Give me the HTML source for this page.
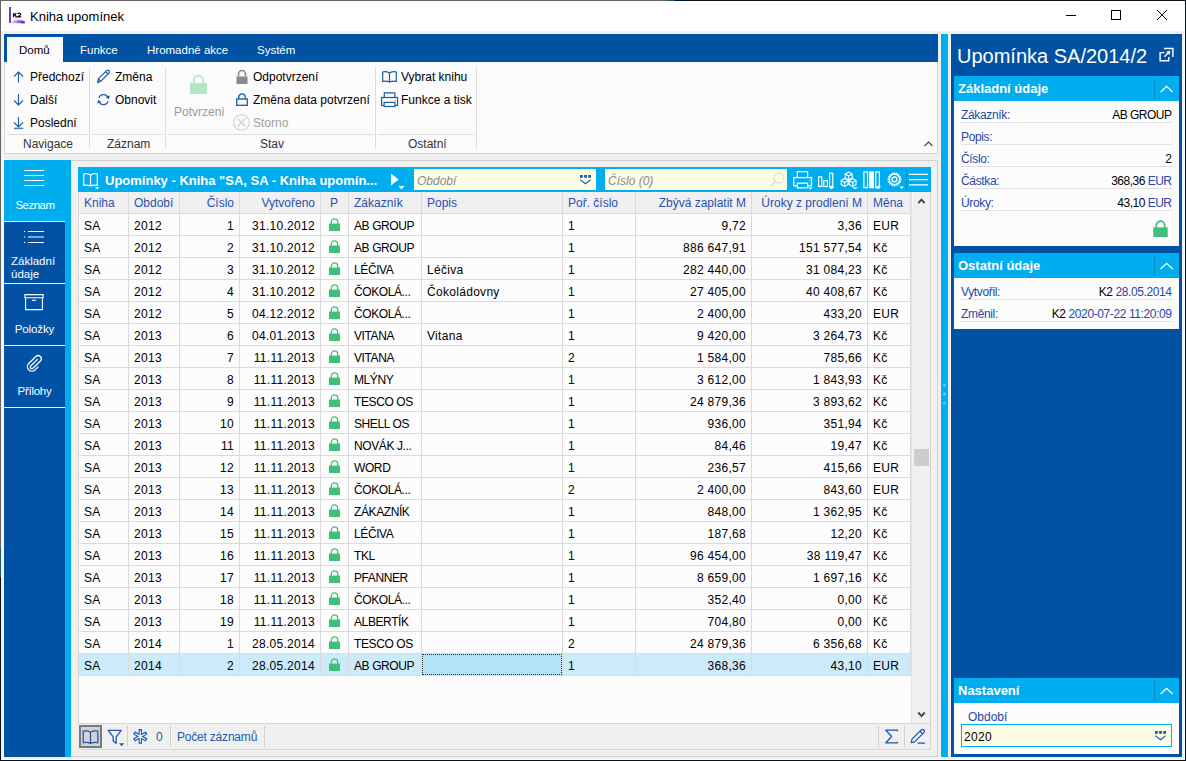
<!DOCTYPE html><html><head><meta charset="utf-8"><style>
*{margin:0;padding:0;box-sizing:border-box}
html,body{width:1186px;height:761px;overflow:hidden;background:#f0f0f0;font-family:"Liberation Sans",sans-serif;font-size:12px;color:#000}
.a{position:absolute}
.t{position:absolute;white-space:nowrap;line-height:14px}
svg{position:absolute;overflow:visible}
</style></head><body>

<div class="a" style="left:0;top:0;width:1186px;height:761px;background:#f0f0f0"></div>
<div class="a" style="left:0;top:0;width:667px;height:1px;background:#646464"></div>
<div class="a" style="left:667px;top:0;width:8px;height:1px;background:#1d5a76"></div>
<div class="a" style="left:675px;top:0;width:511px;height:1px;background:#08121c"></div>
<div class="a" style="left:0;top:0;width:1px;height:548px;background:#646464"></div>
<div class="a" style="left:0;top:548px;width:1px;height:29px;background:#1d5a76"></div>
<div class="a" style="left:0;top:577px;width:1px;height:184px;background:#08121c"></div>
<div class="a" style="left:1185px;top:0;width:1px;height:761px;background:#08121c"></div>
<div class="a" style="left:0;top:760px;width:1186px;height:1px;background:#08121c"></div>
<div class="a" style="left:1px;top:757px;width:1184px;height:2px;background:#f0f0f0"></div>
<div class="a" style="left:1px;top:759px;width:1184px;height:1px;background:#fcfcfc"></div>
<div class="a" style="left:1px;top:31px;width:2px;height:729px;background:#f2f2f2"></div>
<div class="a" style="left:3px;top:31px;width:1px;height:729px;background:#fcfcfc"></div>
<div class="a" style="left:1182px;top:31px;width:2px;height:729px;background:#f2f2f2"></div>
<div class="a" style="left:1184px;top:31px;width:1px;height:729px;background:#fcfcfc"></div>
<div class="a" style="left:1px;top:1px;width:1184px;height:30px;background:#fff"></div>
<svg style="left:9px;top:7px" width="17" height="17" viewBox="0 0 17 17"><rect x="0" y="0" width="2" height="16" fill="#6a3bbf"/><path d="M4.6 6.2V10M4.6 8.3L7.3 6.2M5.6 7.6L7.5 10" fill="none" stroke="#111" stroke-width="1.3"/><path d="M8.4 6.9Q10 5.6 11.5 6.6Q12.2 7.6 10.8 8.6L8.6 9.9H12.3" fill="none" stroke="#111" stroke-width="1.2"/><path d="M2.5 16Q5 12.4 9 12.6Q13 12.8 15.8 14.6L15.6 16.2Q9 16.6 2.5 16Z" fill="#c9a3ea"/><path d="M7 15.8Q9 12.8 12 13.2Q14 13.6 15.8 14.6L15.6 16.2Q11 16.5 7 15.8Z" fill="#8e62d6"/><path d="M11 15.9Q13 13.6 15.8 14.6L15.6 16.2Z" fill="#5a2fc0"/></svg>
<div class="t" style="left:30px;top:10px;font-size:13px">Kniha upomínek</div>
<div class="a" style="left:1066px;top:15px;width:10px;height:1px;background:#000"></div>
<div class="a" style="left:1111px;top:10px;width:10px;height:10px;border:1px solid #000"></div>
<svg style="left:1157px;top:10px" width="10" height="10" viewBox="0 0 10 10"><path d="M0 0L10 10M10 0L0 10" stroke="#000" stroke-width="1"/></svg>
<div class="a" style="left:4px;top:34px;width:934px;height:28px;background:#0152a4"></div>
<div class="a" style="left:7px;top:37px;width:56px;height:25px;background:#fafafa"></div>
<div class="t" style="left:19px;top:43px;font-size:11.5px">Domů</div>
<div class="t" style="left:80px;top:43px;font-size:11.5px;color:#fff">Funkce</div>
<div class="t" style="left:147px;top:43px;font-size:11.5px;color:#fff">Hromadné akce</div>
<div class="t" style="left:257px;top:43px;font-size:11.5px;color:#fff">Systém</div>
<div class="a" style="left:4px;top:62px;width:934px;height:92px;background:#fbfbfb;border:1px solid #d4d4d4;border-top:none"></div>
<div class="a" style="left:89px;top:68px;width:1px;height:80px;background:#dcdcdc"></div>
<div class="a" style="left:165px;top:68px;width:1px;height:80px;background:#dcdcdc"></div>
<div class="a" style="left:375px;top:68px;width:1px;height:80px;background:#dcdcdc"></div>
<div class="a" style="left:476px;top:68px;width:1px;height:80px;background:#dcdcdc"></div>
<div class="a" style="left:7px;top:134px;width:80px;height:1px;background:#dcdcdc"></div>
<div class="a" style="left:92px;top:134px;width:71px;height:1px;background:#dcdcdc"></div>
<div class="a" style="left:168px;top:134px;width:205px;height:1px;background:#dcdcdc"></div>
<div class="a" style="left:378px;top:134px;width:96px;height:1px;background:#dcdcdc"></div>
<svg style="left:13px;top:71px" width="11" height="12" viewBox="0 0 11 12"><path d="M5.5 1V11.5M1 5.5L5.5 1L10 5.5" fill="none" stroke="#1b5aac" stroke-width="1.1"/></svg>
<svg style="left:13px;top:94px" width="11" height="12" viewBox="0 0 11 12"><path d="M5.5 0V11M1 6.5L5.5 11L10 6.5" fill="none" stroke="#1b5aac" stroke-width="1.1"/></svg>
<svg style="left:13px;top:117px" width="11" height="13" viewBox="0 0 11 13"><path d="M5.5 0V10M1 5.5L5.5 10L10 5.5" fill="none" stroke="#1b5aac" stroke-width="1.1"/><path d="M0.9 11.4H10.3" stroke="#1b5aac" stroke-width="1.6" opacity="0.75"/></svg>
<div class="t" style="left:30px;top:70px">Předchozí</div>
<div class="t" style="left:30px;top:93px">Další</div>
<div class="t" style="left:30px;top:116px">Poslední</div>
<div class="t" style="left:23px;top:137px;color:#333">Navigace</div>
<svg style="left:97px;top:70px" width="14" height="14" viewBox="0 0 14 14"><path d="M0.6 12.6L1.3 8.9L9.6 0.6A1.7 1.7 0 0 1 12.0 3.0L3.7 11.3Z M1.3 8.9L3.7 11.3 M8.6 1.6L11 4" fill="none" stroke="#1b5aac" stroke-width="1.2" stroke-linejoin="round"/></svg>
<svg style="left:97px;top:92px" width="14" height="15" viewBox="0 0 14 15"><path d="M1.8 5.9A5 5 0 0 1 11.2 5.9 M11.2 9.3A5 5 0 0 1 1.8 9.3" fill="none" stroke="#1b5aac" stroke-width="1.2"/><path d="M11.8 7.2L12.8 3.6L8.6 5.0Z M1.2 7.9L0.2 11.5L4.4 10.1Z" fill="#1b5aac"/></svg>
<div class="t" style="left:115px;top:70px">Změna</div>
<div class="t" style="left:115px;top:93px">Obnovit</div>
<div class="t" style="left:107px;top:137px;color:#333">Záznam</div>
<svg style="left:190px;top:74px" width="18" height="21" viewBox="0 0 18 21"><path d="M3.9 9.5V6.2a4.6 4.6 0 0 1 9.2 0V9.5" fill="none" stroke="#b3e5c8" stroke-width="1.7"/><rect x="0" y="9" width="17" height="11" fill="#b3e5c8"/></svg>
<div class="t" style="left:174px;top:105px;color:#9a9a9a">Potvrzení</div>
<svg style="left:236px;top:70px" width="12" height="14" viewBox="0 0 12 14"><path d="M2.5 6.5V4a3.5 3.5 0 0 1 7 0V6.5" fill="none" stroke="#8a8a8a" stroke-width="1.6"/><rect x="0.5" y="6.5" width="11" height="7.5" fill="#8a8a8a"/></svg>
<svg style="left:236px;top:93px" width="12" height="13" viewBox="0 0 12 13"><path d="M2.8 6V4a3.2 3.2 0 0 1 6.4 0V6" fill="none" stroke="#1b5aac" stroke-width="1.3"/><rect x="0.7" y="6" width="10.6" height="6.3" fill="none" stroke="#1b5aac" stroke-width="1.3"/></svg>
<svg style="left:233px;top:114px" width="17" height="17" viewBox="0 0 17 17"><circle cx="8.5" cy="8.5" r="7.8" fill="none" stroke="#cfcfcf" stroke-width="1.1"/><path d="M4.5 4.5L12.5 12.5M12.5 4.5L4.5 12.5" stroke="#cfcfcf" stroke-width="1.1"/></svg>
<div class="t" style="left:253px;top:70px">Odpotvrzení</div>
<div class="t" style="left:253px;top:93px">Změna data potvrzení</div>
<div class="t" style="left:253px;top:116px;color:#a0a0a0">Storno</div>
<div class="t" style="left:260px;top:137px;color:#333">Stav</div>
<svg style="left:382px;top:71px" width="15" height="12" viewBox="0 0 15 12"><path d="M7.5 2Q4 0 0.7 1V10.5Q4 9.5 7.5 11Q11 9.5 14.3 10.5V1Q11 0 7.5 2V11" fill="none" stroke="#1b5aac" stroke-width="1.2"/></svg>
<svg style="left:381px;top:92px" width="17" height="15" viewBox="0 0 17 15"><path d="M3.3 5.5V0.9H13.8V5.5" fill="none" stroke="#1b5aac" stroke-width="1.2"/><rect x="0.6" y="5.5" width="16" height="7.9" fill="none" stroke="#1b5aac" stroke-width="1.2"/><rect x="3.1" y="10.4" width="10.9" height="4.1" fill="#fbfbfb" stroke="#1b5aac" stroke-width="1.2"/><rect x="14" y="8" width="0.9" height="0.9" fill="#1b5aac"/></svg>
<div class="t" style="left:401px;top:70px">Vybrat knihu</div>
<div class="t" style="left:401px;top:93px">Funkce a tisk</div>
<div class="t" style="left:408px;top:137px;color:#333">Ostatní</div>
<svg style="left:924px;top:141px" width="9" height="6" viewBox="0 0 9 6"><path d="M0.5 5L4.5 1L8.5 5" fill="none" stroke="#444" stroke-width="1.1"/></svg>
<div class="a" style="left:4px;top:160px;width:67px;height:597px;background:#00adef"></div>
<div class="a" style="left:4px;top:222px;width:61px;height:61px;background:#0152a4"></div>
<div class="a" style="left:4px;top:284px;width:61px;height:61px;background:#0152a4"></div>
<div class="a" style="left:4px;top:346px;width:61px;height:61px;background:#0152a4"></div>
<div class="a" style="left:4px;top:408px;width:61px;height:349px;background:#0152a4"></div>
<div class="a" style="left:4px;top:221px;width:61px;height:1px;background:#f4f4f4"></div>
<div class="a" style="left:4px;top:283px;width:61px;height:1px;background:#f4f4f4"></div>
<div class="a" style="left:4px;top:345px;width:61px;height:1px;background:#f4f4f4"></div>
<div class="a" style="left:4px;top:407px;width:61px;height:1px;background:#f4f4f4"></div>
<svg style="left:24px;top:170px" width="20" height="16" viewBox="0 0 20 16"><path d="M0 0.5H20M0 5.5H20M0 10.5H20M0 15.5H20" stroke="#fff" stroke-width="1"/></svg>
<div class="t" style="left:4.5px;width:61px;text-align:center;top:198px;color:#fff;font-size:11.5px;letter-spacing:-0.5px">Seznam</div>
<svg style="left:24px;top:230px" width="20" height="14" viewBox="0 0 20 14"><path d="M4 1.5H20M4 7H20M4 12.5H20" stroke="#fff" stroke-width="1.1"/><path d="M0 1.5H1.2M0 7H1.2M0 12.5H1.2" stroke="#fff" stroke-width="1.1"/></svg>
<div class="t" style="left:11px;top:255px;color:#fff;font-size:11.5px;line-height:13px;letter-spacing:0px">Základní<br>údaje</div>
<svg style="left:24px;top:294px" width="20" height="17" viewBox="0 0 20 17"><path d="M0.9 0.6H19.1V3.8H0.9Z M1.6 3.8V15.6H18.4V3.8" fill="none" stroke="#fff" stroke-width="1.1"/><path d="M8 6.3H12" stroke="#fff" stroke-width="1.1"/></svg>
<div class="t" style="left:4px;width:61px;text-align:center;top:322px;color:#fff;font-size:11.5px;letter-spacing:-0.1px">Položky</div>
<svg style="left:20px;top:350px" width="26" height="28" viewBox="0 0 26 28"><g transform="translate(21.2,7.3) rotate(45)"><path d="M4.6 8.6L4.6 13.2A4.5 4.5 0 0 1 -4.4 13.2L-4.4 3.2A3.2 3.2 0 0 1 2.0 3.2L2.0 13.6A1.6 1.6 0 0 1 -1.2 13.6L-1.2 3.8" fill="none" stroke="#fff" stroke-width="1.3"/></g></svg>
<div class="t" style="left:4px;width:61px;text-align:center;top:384px;color:#fff;font-size:11.5px;letter-spacing:-0.25px">Přílohy</div>
<div class="a" style="left:71px;top:160px;width:867px;height:597px;border:1px solid #d0d0d0;border-left:none;background:#f0f0f0"></div>
<div class="a" style="left:78px;top:167px;width:853px;height:25px;background:#00adef"></div>
<svg style="left:83px;top:173px" width="17" height="17" viewBox="0 0 17 17"><path d="M7.5 2Q4 0 0.7 1V12.5Q4 11.5 7.5 13Q11 11.5 14.3 12.5V1Q11 0 7.5 2V13" fill="none" stroke="#fff" stroke-width="1.2"/><path d="M12 14H16.5L14.25 16.5Z" fill="#fff"/></svg>
<div class="t" style="left:105px;top:174px;color:#fff;font-weight:bold;font-size:13px">Upomínky - Kniha "SA, SA - Kniha upomín...</div>
<svg style="left:390px;top:172px" width="14" height="17" viewBox="0 0 14 17"><path d="M1 1.5L8.5 7.5L1 13.5Z" fill="#fff"/><path d="M8.5 14H14.5L11.5 17.5Z" fill="#fff"/></svg>
<div class="a" style="left:414px;top:169px;width:182px;height:21px;background:#fdfde6"></div>
<div class="t" style="left:417px;top:174px;color:#8a8a8a;font-style:italic">Období</div>
<svg style="left:579px;top:174px" width="13" height="11" viewBox="0 0 13 11"><rect x="1" y="1" width="2.8" height="2.8" fill="#1b5aac"/><rect x="5.1" y="1" width="2.8" height="2.8" fill="#1b5aac"/><rect x="9.2" y="1" width="2.8" height="2.8" fill="#1b5aac"/><path d="M1.2 5.6L6.5 9.8L11.8 5.6" fill="none" stroke="#1b5aac" stroke-width="1.2"/></svg>
<div class="a" style="left:605px;top:169px;width:182px;height:21px;background:#fdfde6"></div>
<div class="t" style="left:608px;top:174px;color:#8a8a8a;font-style:italic">Číslo (0)</div>
<svg style="left:770px;top:172px" width="15" height="15" viewBox="0 0 15 15"><circle cx="9" cy="6" r="5" fill="none" stroke="#d8d8c8" stroke-width="1"/><path d="M5.5 9.5L1 14" stroke="#d8d8c8" stroke-width="1.2"/></svg>
<svg style="left:793px;top:171px" width="20" height="19" viewBox="0 0 20 19"><path d="M4.3 6.4V0.7H14.6V6.4" fill="none" stroke="#fff" stroke-width="1.3"/><rect x="0.7" y="6.6" width="17.8" height="8.2" fill="none" stroke="#fff" stroke-width="1.3"/><rect x="4.3" y="12.2" width="10.3" height="4.6" fill="#00adef" stroke="#fff" stroke-width="1.3"/><rect x="16" y="9" width="1" height="0.8" fill="#fff"/><path d="M15.2 16.6H19.6L17.4 18.8Z" fill="#fff"/></svg>
<svg style="left:817px;top:172px" width="20" height="18" viewBox="0 0 20 18"><rect x="1.6" y="4.9" width="3.2" height="9.6" fill="none" stroke="#fff" stroke-width="1.2"/><rect x="6.8" y="8.6" width="3.6" height="5.9" fill="none" stroke="#fff" stroke-width="1.2"/><rect x="12.6" y="1.2" width="3.2" height="13.3" fill="none" stroke="#fff" stroke-width="1.2"/><path d="M11.7 14.9H17.2L14.45 17.6Z" fill="#fff"/></svg>
<svg style="left:840px;top:171px" width="20" height="19" viewBox="0 0 20 19"><path d="M8.70 0.90L12.25 2.95V7.05L8.70 9.10L5.15 7.05V2.95ZM5.15 2.95L8.70 5.00L12.25 2.95M8.70 5.00V9.10M4.60 7.60L8.06 9.60V13.60L4.60 15.60L1.14 13.60V9.60ZM1.14 9.60L4.60 11.60L8.06 9.60M4.60 11.60V15.60M12.60 7.60L16.06 9.60V13.60L12.60 15.60L9.14 13.60V9.60ZM9.14 9.60L12.60 11.60L16.06 9.60M12.60 11.60V15.60" fill="none" stroke="#fff" stroke-width="1.1" stroke-linejoin="round"/><path d="M12.3 16.2H18L15.15 18.6Z" fill="#fff"/></svg>
<svg style="left:862px;top:171px" width="21" height="19" viewBox="0 0 21 19"><rect x="1.9" y="0.9" width="3.6" height="15.8" fill="none" stroke="#fff" stroke-width="1.2"/><rect x="7.1" y="0.3" width="4.8" height="17" fill="#fff"/><rect x="13.8" y="0.9" width="3.6" height="15.8" fill="none" stroke="#fff" stroke-width="1.2"/><path d="M13.3 15.3H19.2L16.25 18.2Z" fill="#fff"/></svg>
<svg style="left:886px;top:171px" width="20" height="19" viewBox="0 0 20 19"><circle cx="8.5" cy="8.4" r="5.3" fill="none" stroke="#fff" stroke-width="1.5"/><path d="M13.70 8.40L15.60 8.40M13.30 10.39L15.06 11.12M12.18 12.08L13.52 13.42M10.49 13.20L11.22 14.96M8.50 13.60L8.50 15.50M6.51 13.20L5.78 14.96M4.82 12.08L3.48 13.42M3.70 10.39L1.94 11.12M3.30 8.40L1.40 8.40M3.70 6.41L1.94 5.68M4.82 4.72L3.48 3.38M6.51 3.60L5.78 1.84M8.50 3.20L8.50 1.30M10.49 3.60L11.22 1.84M12.18 4.72L13.52 3.38M13.30 6.41L15.06 5.68" stroke="#fff" stroke-width="1.2"/><circle cx="8.5" cy="8.4" r="2.4" fill="none" stroke="#fff" stroke-width="1.3"/><path d="M12.6 15.3H18.4L15.5 18.2Z" fill="#00adef"/><path d="M13.2 15.5H18L15.6 17.9Z" fill="#fff"/></svg>
<div class="a" style="left:906px;top:169px;width:1px;height:21px;background:#0a8ac6"></div>
<svg style="left:909px;top:172px" width="20" height="14" viewBox="0 0 20 14"><path d="M0 2.3H19M0 7.6H19M0 12.9H19" stroke="#fff" stroke-width="1.2"/></svg>
<div class="a" style="left:78px;top:192px;width:853px;height:531px;background:#fcfcfc;border-left:1px solid #d6d6d6"></div>
<div class="a" style="left:79px;top:192px;width:832px;height:21px;background:#f0f0f0"></div>
<div class="a" style="left:911px;top:192px;width:20px;height:531px;background:#f0f0f0;border-left:1px solid #e4e4e4"></div>
<svg style="left:917px;top:197px" width="9" height="8" viewBox="0 0 9 8"><path d="M1.3 6.2L4.5 2.6L7.7 6.2" fill="none" stroke="#444" stroke-width="1.9"/></svg>
<div class="a" style="left:912px;top:192px;width:1px;height:17px;background:#fafafa"></div>
<div class="a" style="left:930px;top:192px;width:1px;height:531px;background:#d2d2d2"></div>
<svg style="left:917px;top:711px" width="9" height="8" viewBox="0 0 9 8"><path d="M1.3 1.5L4.5 5.1L7.7 1.5" fill="none" stroke="#444" stroke-width="1.9"/></svg>
<div class="a" style="left:914px;top:449px;width:15px;height:17px;background:#cdcdcd"></div>
<div class="t" style="left:84px;top:196px;color:#2b4fae">Kniha</div>
<div class="t" style="left:134px;top:196px;color:#2b4fae">Období</div>
<div class="t" style="left:179px;width:55px;text-align:right;top:196px;color:#2b4fae">Číslo</div>
<div class="t" style="left:239px;width:76px;text-align:right;top:196px;color:#2b4fae">Vytvořeno</div>
<div class="t" style="left:320px;width:28px;text-align:center;top:196px;color:#2b4fae">P</div>
<div class="t" style="left:354px;top:196px;color:#2b4fae">Zákazník</div>
<div class="t" style="left:427px;top:196px;color:#2b4fae">Popis</div>
<div class="t" style="left:568px;top:196px;color:#2b4fae">Poř. číslo</div>
<div class="t" style="left:635px;width:111px;text-align:right;top:196px;color:#2b4fae">Zbývá zaplatit M</div>
<div class="t" style="left:751px;width:111px;text-align:right;top:196px;color:#2b4fae">Úroky z prodlení M</div>
<div class="t" style="left:873px;top:196px;color:#2b4fae">Měna</div>
<div class="t" style="left:84px;top:219px;letter-spacing:0.3px">SA</div>
<div class="t" style="left:134px;top:219px;letter-spacing:0.3px">2012</div>
<div class="t" style="left:179px;width:55px;text-align:right;top:219px;letter-spacing:0.3px">1</div>
<div class="t" style="left:239px;width:76px;text-align:right;top:219px;letter-spacing:0.3px">31.10.2012</div>
<svg style="position:absolute;left:329px;top:218px" width="11" height="13" viewBox="0 0 11 13"><path d="M2.3 6V4.1a3.2 3.2 0 0 1 6.4 0V6" fill="none" stroke="#40bf78" stroke-width="1.3"/><rect x="0" y="5.6" width="11" height="7.4" fill="#40bf78"/></svg>
<div class="t" style="left:354px;top:219px;letter-spacing:-0.4px">AB GROUP</div>
<div class="t" style="left:568px;top:219px;letter-spacing:0.3px">1</div>
<div class="t" style="left:635px;width:111px;text-align:right;top:219px;letter-spacing:0.3px">9,72</div>
<div class="t" style="left:751px;width:111px;text-align:right;top:219px;letter-spacing:0.3px">3,36</div>
<div class="t" style="left:873px;top:219px;letter-spacing:0.3px">EUR</div>
<div class="t" style="left:84px;top:241px;letter-spacing:0.3px">SA</div>
<div class="t" style="left:134px;top:241px;letter-spacing:0.3px">2012</div>
<div class="t" style="left:179px;width:55px;text-align:right;top:241px;letter-spacing:0.3px">2</div>
<div class="t" style="left:239px;width:76px;text-align:right;top:241px;letter-spacing:0.3px">31.10.2012</div>
<svg style="position:absolute;left:329px;top:240px" width="11" height="13" viewBox="0 0 11 13"><path d="M2.3 6V4.1a3.2 3.2 0 0 1 6.4 0V6" fill="none" stroke="#40bf78" stroke-width="1.3"/><rect x="0" y="5.6" width="11" height="7.4" fill="#40bf78"/></svg>
<div class="t" style="left:354px;top:241px;letter-spacing:-0.4px">AB GROUP</div>
<div class="t" style="left:568px;top:241px;letter-spacing:0.3px">1</div>
<div class="t" style="left:635px;width:111px;text-align:right;top:241px;letter-spacing:0.3px">886 647,91</div>
<div class="t" style="left:751px;width:111px;text-align:right;top:241px;letter-spacing:0.3px">151 577,54</div>
<div class="t" style="left:873px;top:241px;letter-spacing:0.3px">Kč</div>
<div class="t" style="left:84px;top:263px;letter-spacing:0.3px">SA</div>
<div class="t" style="left:134px;top:263px;letter-spacing:0.3px">2012</div>
<div class="t" style="left:179px;width:55px;text-align:right;top:263px;letter-spacing:0.3px">3</div>
<div class="t" style="left:239px;width:76px;text-align:right;top:263px;letter-spacing:0.3px">31.10.2012</div>
<svg style="position:absolute;left:329px;top:262px" width="11" height="13" viewBox="0 0 11 13"><path d="M2.3 6V4.1a3.2 3.2 0 0 1 6.4 0V6" fill="none" stroke="#40bf78" stroke-width="1.3"/><rect x="0" y="5.6" width="11" height="7.4" fill="#40bf78"/></svg>
<div class="t" style="left:354px;top:263px;letter-spacing:-0.4px">LÉČIVA</div>
<div class="t" style="left:427px;top:263px;letter-spacing:0.3px">Léčiva</div>
<div class="t" style="left:568px;top:263px;letter-spacing:0.3px">1</div>
<div class="t" style="left:635px;width:111px;text-align:right;top:263px;letter-spacing:0.3px">282 440,00</div>
<div class="t" style="left:751px;width:111px;text-align:right;top:263px;letter-spacing:0.3px">31 084,23</div>
<div class="t" style="left:873px;top:263px;letter-spacing:0.3px">Kč</div>
<div class="t" style="left:84px;top:285px;letter-spacing:0.3px">SA</div>
<div class="t" style="left:134px;top:285px;letter-spacing:0.3px">2012</div>
<div class="t" style="left:179px;width:55px;text-align:right;top:285px;letter-spacing:0.3px">4</div>
<div class="t" style="left:239px;width:76px;text-align:right;top:285px;letter-spacing:0.3px">31.10.2012</div>
<svg style="position:absolute;left:329px;top:284px" width="11" height="13" viewBox="0 0 11 13"><path d="M2.3 6V4.1a3.2 3.2 0 0 1 6.4 0V6" fill="none" stroke="#40bf78" stroke-width="1.3"/><rect x="0" y="5.6" width="11" height="7.4" fill="#40bf78"/></svg>
<div class="t" style="left:354px;top:285px;letter-spacing:-0.4px">ČOKOLÁ...</div>
<div class="t" style="left:427px;top:285px;letter-spacing:0.3px">Čokoládovny</div>
<div class="t" style="left:568px;top:285px;letter-spacing:0.3px">1</div>
<div class="t" style="left:635px;width:111px;text-align:right;top:285px;letter-spacing:0.3px">27 405,00</div>
<div class="t" style="left:751px;width:111px;text-align:right;top:285px;letter-spacing:0.3px">40 408,67</div>
<div class="t" style="left:873px;top:285px;letter-spacing:0.3px">Kč</div>
<div class="t" style="left:84px;top:307px;letter-spacing:0.3px">SA</div>
<div class="t" style="left:134px;top:307px;letter-spacing:0.3px">2012</div>
<div class="t" style="left:179px;width:55px;text-align:right;top:307px;letter-spacing:0.3px">5</div>
<div class="t" style="left:239px;width:76px;text-align:right;top:307px;letter-spacing:0.3px">04.12.2012</div>
<svg style="position:absolute;left:329px;top:306px" width="11" height="13" viewBox="0 0 11 13"><path d="M2.3 6V4.1a3.2 3.2 0 0 1 6.4 0V6" fill="none" stroke="#40bf78" stroke-width="1.3"/><rect x="0" y="5.6" width="11" height="7.4" fill="#40bf78"/></svg>
<div class="t" style="left:354px;top:307px;letter-spacing:-0.4px">ČOKOLÁ...</div>
<div class="t" style="left:568px;top:307px;letter-spacing:0.3px">1</div>
<div class="t" style="left:635px;width:111px;text-align:right;top:307px;letter-spacing:0.3px">2 400,00</div>
<div class="t" style="left:751px;width:111px;text-align:right;top:307px;letter-spacing:0.3px">433,20</div>
<div class="t" style="left:873px;top:307px;letter-spacing:0.3px">EUR</div>
<div class="t" style="left:84px;top:329px;letter-spacing:0.3px">SA</div>
<div class="t" style="left:134px;top:329px;letter-spacing:0.3px">2013</div>
<div class="t" style="left:179px;width:55px;text-align:right;top:329px;letter-spacing:0.3px">6</div>
<div class="t" style="left:239px;width:76px;text-align:right;top:329px;letter-spacing:0.3px">04.01.2013</div>
<svg style="position:absolute;left:329px;top:328px" width="11" height="13" viewBox="0 0 11 13"><path d="M2.3 6V4.1a3.2 3.2 0 0 1 6.4 0V6" fill="none" stroke="#40bf78" stroke-width="1.3"/><rect x="0" y="5.6" width="11" height="7.4" fill="#40bf78"/></svg>
<div class="t" style="left:354px;top:329px;letter-spacing:-0.4px">VITANA</div>
<div class="t" style="left:427px;top:329px;letter-spacing:0.3px">Vitana</div>
<div class="t" style="left:568px;top:329px;letter-spacing:0.3px">1</div>
<div class="t" style="left:635px;width:111px;text-align:right;top:329px;letter-spacing:0.3px">9 420,00</div>
<div class="t" style="left:751px;width:111px;text-align:right;top:329px;letter-spacing:0.3px">3 264,73</div>
<div class="t" style="left:873px;top:329px;letter-spacing:0.3px">Kč</div>
<div class="t" style="left:84px;top:351px;letter-spacing:0.3px">SA</div>
<div class="t" style="left:134px;top:351px;letter-spacing:0.3px">2013</div>
<div class="t" style="left:179px;width:55px;text-align:right;top:351px;letter-spacing:0.3px">7</div>
<div class="t" style="left:239px;width:76px;text-align:right;top:351px;letter-spacing:0.3px">11.11.2013</div>
<svg style="position:absolute;left:329px;top:350px" width="11" height="13" viewBox="0 0 11 13"><path d="M2.3 6V4.1a3.2 3.2 0 0 1 6.4 0V6" fill="none" stroke="#40bf78" stroke-width="1.3"/><rect x="0" y="5.6" width="11" height="7.4" fill="#40bf78"/></svg>
<div class="t" style="left:354px;top:351px;letter-spacing:-0.4px">VITANA</div>
<div class="t" style="left:568px;top:351px;letter-spacing:0.3px">2</div>
<div class="t" style="left:635px;width:111px;text-align:right;top:351px;letter-spacing:0.3px">1 584,00</div>
<div class="t" style="left:751px;width:111px;text-align:right;top:351px;letter-spacing:0.3px">785,66</div>
<div class="t" style="left:873px;top:351px;letter-spacing:0.3px">Kč</div>
<div class="t" style="left:84px;top:373px;letter-spacing:0.3px">SA</div>
<div class="t" style="left:134px;top:373px;letter-spacing:0.3px">2013</div>
<div class="t" style="left:179px;width:55px;text-align:right;top:373px;letter-spacing:0.3px">8</div>
<div class="t" style="left:239px;width:76px;text-align:right;top:373px;letter-spacing:0.3px">11.11.2013</div>
<svg style="position:absolute;left:329px;top:372px" width="11" height="13" viewBox="0 0 11 13"><path d="M2.3 6V4.1a3.2 3.2 0 0 1 6.4 0V6" fill="none" stroke="#40bf78" stroke-width="1.3"/><rect x="0" y="5.6" width="11" height="7.4" fill="#40bf78"/></svg>
<div class="t" style="left:354px;top:373px;letter-spacing:-0.4px">MLÝNY</div>
<div class="t" style="left:568px;top:373px;letter-spacing:0.3px">1</div>
<div class="t" style="left:635px;width:111px;text-align:right;top:373px;letter-spacing:0.3px">3 612,00</div>
<div class="t" style="left:751px;width:111px;text-align:right;top:373px;letter-spacing:0.3px">1 843,93</div>
<div class="t" style="left:873px;top:373px;letter-spacing:0.3px">Kč</div>
<div class="t" style="left:84px;top:395px;letter-spacing:0.3px">SA</div>
<div class="t" style="left:134px;top:395px;letter-spacing:0.3px">2013</div>
<div class="t" style="left:179px;width:55px;text-align:right;top:395px;letter-spacing:0.3px">9</div>
<div class="t" style="left:239px;width:76px;text-align:right;top:395px;letter-spacing:0.3px">11.11.2013</div>
<svg style="position:absolute;left:329px;top:394px" width="11" height="13" viewBox="0 0 11 13"><path d="M2.3 6V4.1a3.2 3.2 0 0 1 6.4 0V6" fill="none" stroke="#40bf78" stroke-width="1.3"/><rect x="0" y="5.6" width="11" height="7.4" fill="#40bf78"/></svg>
<div class="t" style="left:354px;top:395px;letter-spacing:-0.4px">TESCO OS</div>
<div class="t" style="left:568px;top:395px;letter-spacing:0.3px">1</div>
<div class="t" style="left:635px;width:111px;text-align:right;top:395px;letter-spacing:0.3px">24 879,36</div>
<div class="t" style="left:751px;width:111px;text-align:right;top:395px;letter-spacing:0.3px">3 893,62</div>
<div class="t" style="left:873px;top:395px;letter-spacing:0.3px">Kč</div>
<div class="t" style="left:84px;top:417px;letter-spacing:0.3px">SA</div>
<div class="t" style="left:134px;top:417px;letter-spacing:0.3px">2013</div>
<div class="t" style="left:179px;width:55px;text-align:right;top:417px;letter-spacing:0.3px">10</div>
<div class="t" style="left:239px;width:76px;text-align:right;top:417px;letter-spacing:0.3px">11.11.2013</div>
<svg style="position:absolute;left:329px;top:416px" width="11" height="13" viewBox="0 0 11 13"><path d="M2.3 6V4.1a3.2 3.2 0 0 1 6.4 0V6" fill="none" stroke="#40bf78" stroke-width="1.3"/><rect x="0" y="5.6" width="11" height="7.4" fill="#40bf78"/></svg>
<div class="t" style="left:354px;top:417px;letter-spacing:-0.4px">SHELL OS</div>
<div class="t" style="left:568px;top:417px;letter-spacing:0.3px">1</div>
<div class="t" style="left:635px;width:111px;text-align:right;top:417px;letter-spacing:0.3px">936,00</div>
<div class="t" style="left:751px;width:111px;text-align:right;top:417px;letter-spacing:0.3px">351,94</div>
<div class="t" style="left:873px;top:417px;letter-spacing:0.3px">Kč</div>
<div class="t" style="left:84px;top:439px;letter-spacing:0.3px">SA</div>
<div class="t" style="left:134px;top:439px;letter-spacing:0.3px">2013</div>
<div class="t" style="left:179px;width:55px;text-align:right;top:439px;letter-spacing:0.3px">11</div>
<div class="t" style="left:239px;width:76px;text-align:right;top:439px;letter-spacing:0.3px">11.11.2013</div>
<svg style="position:absolute;left:329px;top:438px" width="11" height="13" viewBox="0 0 11 13"><path d="M2.3 6V4.1a3.2 3.2 0 0 1 6.4 0V6" fill="none" stroke="#40bf78" stroke-width="1.3"/><rect x="0" y="5.6" width="11" height="7.4" fill="#40bf78"/></svg>
<div class="t" style="left:354px;top:439px;letter-spacing:-0.4px">NOVÁK J...</div>
<div class="t" style="left:568px;top:439px;letter-spacing:0.3px">1</div>
<div class="t" style="left:635px;width:111px;text-align:right;top:439px;letter-spacing:0.3px">84,46</div>
<div class="t" style="left:751px;width:111px;text-align:right;top:439px;letter-spacing:0.3px">19,47</div>
<div class="t" style="left:873px;top:439px;letter-spacing:0.3px">Kč</div>
<div class="t" style="left:84px;top:461px;letter-spacing:0.3px">SA</div>
<div class="t" style="left:134px;top:461px;letter-spacing:0.3px">2013</div>
<div class="t" style="left:179px;width:55px;text-align:right;top:461px;letter-spacing:0.3px">12</div>
<div class="t" style="left:239px;width:76px;text-align:right;top:461px;letter-spacing:0.3px">11.11.2013</div>
<svg style="position:absolute;left:329px;top:460px" width="11" height="13" viewBox="0 0 11 13"><path d="M2.3 6V4.1a3.2 3.2 0 0 1 6.4 0V6" fill="none" stroke="#40bf78" stroke-width="1.3"/><rect x="0" y="5.6" width="11" height="7.4" fill="#40bf78"/></svg>
<div class="t" style="left:354px;top:461px;letter-spacing:-0.4px">WORD</div>
<div class="t" style="left:568px;top:461px;letter-spacing:0.3px">1</div>
<div class="t" style="left:635px;width:111px;text-align:right;top:461px;letter-spacing:0.3px">236,57</div>
<div class="t" style="left:751px;width:111px;text-align:right;top:461px;letter-spacing:0.3px">415,66</div>
<div class="t" style="left:873px;top:461px;letter-spacing:0.3px">EUR</div>
<div class="t" style="left:84px;top:483px;letter-spacing:0.3px">SA</div>
<div class="t" style="left:134px;top:483px;letter-spacing:0.3px">2013</div>
<div class="t" style="left:179px;width:55px;text-align:right;top:483px;letter-spacing:0.3px">13</div>
<div class="t" style="left:239px;width:76px;text-align:right;top:483px;letter-spacing:0.3px">11.11.2013</div>
<svg style="position:absolute;left:329px;top:482px" width="11" height="13" viewBox="0 0 11 13"><path d="M2.3 6V4.1a3.2 3.2 0 0 1 6.4 0V6" fill="none" stroke="#40bf78" stroke-width="1.3"/><rect x="0" y="5.6" width="11" height="7.4" fill="#40bf78"/></svg>
<div class="t" style="left:354px;top:483px;letter-spacing:-0.4px">ČOKOLÁ...</div>
<div class="t" style="left:568px;top:483px;letter-spacing:0.3px">2</div>
<div class="t" style="left:635px;width:111px;text-align:right;top:483px;letter-spacing:0.3px">2 400,00</div>
<div class="t" style="left:751px;width:111px;text-align:right;top:483px;letter-spacing:0.3px">843,60</div>
<div class="t" style="left:873px;top:483px;letter-spacing:0.3px">EUR</div>
<div class="t" style="left:84px;top:505px;letter-spacing:0.3px">SA</div>
<div class="t" style="left:134px;top:505px;letter-spacing:0.3px">2013</div>
<div class="t" style="left:179px;width:55px;text-align:right;top:505px;letter-spacing:0.3px">14</div>
<div class="t" style="left:239px;width:76px;text-align:right;top:505px;letter-spacing:0.3px">11.11.2013</div>
<svg style="position:absolute;left:329px;top:504px" width="11" height="13" viewBox="0 0 11 13"><path d="M2.3 6V4.1a3.2 3.2 0 0 1 6.4 0V6" fill="none" stroke="#40bf78" stroke-width="1.3"/><rect x="0" y="5.6" width="11" height="7.4" fill="#40bf78"/></svg>
<div class="t" style="left:354px;top:505px;letter-spacing:-0.4px">ZÁKAZNÍK</div>
<div class="t" style="left:568px;top:505px;letter-spacing:0.3px">1</div>
<div class="t" style="left:635px;width:111px;text-align:right;top:505px;letter-spacing:0.3px">848,00</div>
<div class="t" style="left:751px;width:111px;text-align:right;top:505px;letter-spacing:0.3px">1 362,95</div>
<div class="t" style="left:873px;top:505px;letter-spacing:0.3px">Kč</div>
<div class="t" style="left:84px;top:527px;letter-spacing:0.3px">SA</div>
<div class="t" style="left:134px;top:527px;letter-spacing:0.3px">2013</div>
<div class="t" style="left:179px;width:55px;text-align:right;top:527px;letter-spacing:0.3px">15</div>
<div class="t" style="left:239px;width:76px;text-align:right;top:527px;letter-spacing:0.3px">11.11.2013</div>
<svg style="position:absolute;left:329px;top:526px" width="11" height="13" viewBox="0 0 11 13"><path d="M2.3 6V4.1a3.2 3.2 0 0 1 6.4 0V6" fill="none" stroke="#40bf78" stroke-width="1.3"/><rect x="0" y="5.6" width="11" height="7.4" fill="#40bf78"/></svg>
<div class="t" style="left:354px;top:527px;letter-spacing:-0.4px">LÉČIVA</div>
<div class="t" style="left:568px;top:527px;letter-spacing:0.3px">1</div>
<div class="t" style="left:635px;width:111px;text-align:right;top:527px;letter-spacing:0.3px">187,68</div>
<div class="t" style="left:751px;width:111px;text-align:right;top:527px;letter-spacing:0.3px">12,20</div>
<div class="t" style="left:873px;top:527px;letter-spacing:0.3px">Kč</div>
<div class="t" style="left:84px;top:549px;letter-spacing:0.3px">SA</div>
<div class="t" style="left:134px;top:549px;letter-spacing:0.3px">2013</div>
<div class="t" style="left:179px;width:55px;text-align:right;top:549px;letter-spacing:0.3px">16</div>
<div class="t" style="left:239px;width:76px;text-align:right;top:549px;letter-spacing:0.3px">11.11.2013</div>
<svg style="position:absolute;left:329px;top:548px" width="11" height="13" viewBox="0 0 11 13"><path d="M2.3 6V4.1a3.2 3.2 0 0 1 6.4 0V6" fill="none" stroke="#40bf78" stroke-width="1.3"/><rect x="0" y="5.6" width="11" height="7.4" fill="#40bf78"/></svg>
<div class="t" style="left:354px;top:549px;letter-spacing:-0.4px">TKL</div>
<div class="t" style="left:568px;top:549px;letter-spacing:0.3px">1</div>
<div class="t" style="left:635px;width:111px;text-align:right;top:549px;letter-spacing:0.3px">96 454,00</div>
<div class="t" style="left:751px;width:111px;text-align:right;top:549px;letter-spacing:0.3px">38 119,47</div>
<div class="t" style="left:873px;top:549px;letter-spacing:0.3px">Kč</div>
<div class="t" style="left:84px;top:571px;letter-spacing:0.3px">SA</div>
<div class="t" style="left:134px;top:571px;letter-spacing:0.3px">2013</div>
<div class="t" style="left:179px;width:55px;text-align:right;top:571px;letter-spacing:0.3px">17</div>
<div class="t" style="left:239px;width:76px;text-align:right;top:571px;letter-spacing:0.3px">11.11.2013</div>
<svg style="position:absolute;left:329px;top:570px" width="11" height="13" viewBox="0 0 11 13"><path d="M2.3 6V4.1a3.2 3.2 0 0 1 6.4 0V6" fill="none" stroke="#40bf78" stroke-width="1.3"/><rect x="0" y="5.6" width="11" height="7.4" fill="#40bf78"/></svg>
<div class="t" style="left:354px;top:571px;letter-spacing:-0.4px">PFANNER</div>
<div class="t" style="left:568px;top:571px;letter-spacing:0.3px">1</div>
<div class="t" style="left:635px;width:111px;text-align:right;top:571px;letter-spacing:0.3px">8 659,00</div>
<div class="t" style="left:751px;width:111px;text-align:right;top:571px;letter-spacing:0.3px">1 697,16</div>
<div class="t" style="left:873px;top:571px;letter-spacing:0.3px">Kč</div>
<div class="t" style="left:84px;top:593px;letter-spacing:0.3px">SA</div>
<div class="t" style="left:134px;top:593px;letter-spacing:0.3px">2013</div>
<div class="t" style="left:179px;width:55px;text-align:right;top:593px;letter-spacing:0.3px">18</div>
<div class="t" style="left:239px;width:76px;text-align:right;top:593px;letter-spacing:0.3px">11.11.2013</div>
<svg style="position:absolute;left:329px;top:592px" width="11" height="13" viewBox="0 0 11 13"><path d="M2.3 6V4.1a3.2 3.2 0 0 1 6.4 0V6" fill="none" stroke="#40bf78" stroke-width="1.3"/><rect x="0" y="5.6" width="11" height="7.4" fill="#40bf78"/></svg>
<div class="t" style="left:354px;top:593px;letter-spacing:-0.4px">ČOKOLÁ...</div>
<div class="t" style="left:568px;top:593px;letter-spacing:0.3px">1</div>
<div class="t" style="left:635px;width:111px;text-align:right;top:593px;letter-spacing:0.3px">352,40</div>
<div class="t" style="left:751px;width:111px;text-align:right;top:593px;letter-spacing:0.3px">0,00</div>
<div class="t" style="left:873px;top:593px;letter-spacing:0.3px">Kč</div>
<div class="t" style="left:84px;top:615px;letter-spacing:0.3px">SA</div>
<div class="t" style="left:134px;top:615px;letter-spacing:0.3px">2013</div>
<div class="t" style="left:179px;width:55px;text-align:right;top:615px;letter-spacing:0.3px">19</div>
<div class="t" style="left:239px;width:76px;text-align:right;top:615px;letter-spacing:0.3px">11.11.2013</div>
<svg style="position:absolute;left:329px;top:614px" width="11" height="13" viewBox="0 0 11 13"><path d="M2.3 6V4.1a3.2 3.2 0 0 1 6.4 0V6" fill="none" stroke="#40bf78" stroke-width="1.3"/><rect x="0" y="5.6" width="11" height="7.4" fill="#40bf78"/></svg>
<div class="t" style="left:354px;top:615px;letter-spacing:-0.4px">ALBERTÍK</div>
<div class="t" style="left:568px;top:615px;letter-spacing:0.3px">1</div>
<div class="t" style="left:635px;width:111px;text-align:right;top:615px;letter-spacing:0.3px">704,80</div>
<div class="t" style="left:751px;width:111px;text-align:right;top:615px;letter-spacing:0.3px">0,00</div>
<div class="t" style="left:873px;top:615px;letter-spacing:0.3px">Kč</div>
<div class="t" style="left:84px;top:637px;letter-spacing:0.3px">SA</div>
<div class="t" style="left:134px;top:637px;letter-spacing:0.3px">2014</div>
<div class="t" style="left:179px;width:55px;text-align:right;top:637px;letter-spacing:0.3px">1</div>
<div class="t" style="left:239px;width:76px;text-align:right;top:637px;letter-spacing:0.3px">28.05.2014</div>
<svg style="position:absolute;left:329px;top:636px" width="11" height="13" viewBox="0 0 11 13"><path d="M2.3 6V4.1a3.2 3.2 0 0 1 6.4 0V6" fill="none" stroke="#40bf78" stroke-width="1.3"/><rect x="0" y="5.6" width="11" height="7.4" fill="#40bf78"/></svg>
<div class="t" style="left:354px;top:637px;letter-spacing:-0.4px">TESCO OS</div>
<div class="t" style="left:568px;top:637px;letter-spacing:0.3px">2</div>
<div class="t" style="left:635px;width:111px;text-align:right;top:637px;letter-spacing:0.3px">24 879,36</div>
<div class="t" style="left:751px;width:111px;text-align:right;top:637px;letter-spacing:0.3px">6 356,68</div>
<div class="t" style="left:873px;top:637px;letter-spacing:0.3px">Kč</div>
<div class="a" style="left:79px;top:654px;width:832px;height:21px;background:#cbebfa"></div>
<div class="a" style="left:422px;top:654px;width:140px;height:21px;border:1px dotted #333;background:#b2e3f8"></div>
<div class="t" style="left:84px;top:659px;letter-spacing:0.3px">SA</div>
<div class="t" style="left:134px;top:659px;letter-spacing:0.3px">2014</div>
<div class="t" style="left:179px;width:55px;text-align:right;top:659px;letter-spacing:0.3px">2</div>
<div class="t" style="left:239px;width:76px;text-align:right;top:659px;letter-spacing:0.3px">28.05.2014</div>
<svg style="position:absolute;left:329px;top:658px" width="11" height="13" viewBox="0 0 11 13"><path d="M2.3 6V4.1a3.2 3.2 0 0 1 6.4 0V6" fill="none" stroke="#40bf78" stroke-width="1.3"/><rect x="0" y="5.6" width="11" height="7.4" fill="#40bf78"/></svg>
<div class="t" style="left:354px;top:659px;letter-spacing:-0.4px">AB GROUP</div>
<div class="t" style="left:568px;top:659px;letter-spacing:0.3px">1</div>
<div class="t" style="left:635px;width:111px;text-align:right;top:659px;letter-spacing:0.3px">368,36</div>
<div class="t" style="left:751px;width:111px;text-align:right;top:659px;letter-spacing:0.3px">43,10</div>
<div class="t" style="left:873px;top:659px;letter-spacing:0.3px">EUR</div>
<div class="a" style="left:79px;top:213px;width:832px;height:1px;background:#dadada"></div>
<div class="a" style="left:79px;top:235px;width:832px;height:1px;background:#dadada"></div>
<div class="a" style="left:79px;top:257px;width:832px;height:1px;background:#dadada"></div>
<div class="a" style="left:79px;top:279px;width:832px;height:1px;background:#dadada"></div>
<div class="a" style="left:79px;top:301px;width:832px;height:1px;background:#dadada"></div>
<div class="a" style="left:79px;top:323px;width:832px;height:1px;background:#dadada"></div>
<div class="a" style="left:79px;top:345px;width:832px;height:1px;background:#dadada"></div>
<div class="a" style="left:79px;top:367px;width:832px;height:1px;background:#dadada"></div>
<div class="a" style="left:79px;top:389px;width:832px;height:1px;background:#dadada"></div>
<div class="a" style="left:79px;top:411px;width:832px;height:1px;background:#dadada"></div>
<div class="a" style="left:79px;top:433px;width:832px;height:1px;background:#dadada"></div>
<div class="a" style="left:79px;top:455px;width:832px;height:1px;background:#dadada"></div>
<div class="a" style="left:79px;top:477px;width:832px;height:1px;background:#dadada"></div>
<div class="a" style="left:79px;top:499px;width:832px;height:1px;background:#dadada"></div>
<div class="a" style="left:79px;top:521px;width:832px;height:1px;background:#dadada"></div>
<div class="a" style="left:79px;top:543px;width:832px;height:1px;background:#dadada"></div>
<div class="a" style="left:79px;top:565px;width:832px;height:1px;background:#dadada"></div>
<div class="a" style="left:79px;top:587px;width:832px;height:1px;background:#dadada"></div>
<div class="a" style="left:79px;top:609px;width:832px;height:1px;background:#dadada"></div>
<div class="a" style="left:79px;top:631px;width:832px;height:1px;background:#dadada"></div>
<div class="a" style="left:79px;top:653px;width:832px;height:1px;background:#dadada"></div>
<div class="a" style="left:79px;top:675px;width:832px;height:1px;background:#dadada"></div>
<div class="a" style="left:128px;top:192px;width:1px;height:483px;background:#dadada"></div>
<div class="a" style="left:179px;top:192px;width:1px;height:483px;background:#dadada"></div>
<div class="a" style="left:239px;top:192px;width:1px;height:483px;background:#dadada"></div>
<div class="a" style="left:320px;top:192px;width:1px;height:483px;background:#dadada"></div>
<div class="a" style="left:348px;top:192px;width:1px;height:483px;background:#dadada"></div>
<div class="a" style="left:421px;top:192px;width:1px;height:483px;background:#dadada"></div>
<div class="a" style="left:562px;top:192px;width:1px;height:483px;background:#dadada"></div>
<div class="a" style="left:635px;top:192px;width:1px;height:483px;background:#dadada"></div>
<div class="a" style="left:751px;top:192px;width:1px;height:483px;background:#dadada"></div>
<div class="a" style="left:867px;top:192px;width:1px;height:483px;background:#dadada"></div>
<div class="a" style="left:910px;top:192px;width:1px;height:483px;background:#dadada"></div>
<div class="a" style="left:78px;top:723px;width:853px;height:27px;background:#f0f0f0;border-top:1px solid #d6d6d6;border-bottom:1px solid #d6d6d6;border-right:1px solid #d6d6d6"></div>
<div class="a" style="left:79px;top:725px;width:23px;height:23px;background:#d3d3d3;border:2px solid #7a7a7a"></div>
<svg style="left:82px;top:730px" width="17" height="15" viewBox="0 0 17 15"><path d="M8.5 2.2Q5 0.3 1.2 1.2V12.6Q5 11.7 8.5 13.4Q12 11.7 15.8 12.6V1.2Q12 0.3 8.5 2.2V13.4" fill="none" stroke="#1b5aac" stroke-width="1.3"/></svg>
<svg style="left:107px;top:729px" width="18" height="18" viewBox="0 0 18 18"><path d="M1.2 1.3H14.2L9.2 7.8V14.3L6.2 12V7.8Z" fill="none" stroke="#1b5aac" stroke-width="1.3" stroke-linejoin="round"/><path d="M12 14.3H17.2L14.6 17.2Z" fill="#1b5aac"/></svg>
<div class="a" style="left:127px;top:726px;width:1px;height:20px;background:#d0d0d0"></div>
<svg style="left:130px;top:726px" width="21" height="21" viewBox="0 0 21 21"><path d="M10.30 17.70L10.30 3.10M16.62 14.05L3.98 6.75M16.62 6.75L3.98 14.05" fill="none" stroke="#1b5aac" stroke-width="3.4"/><path d="M10.30 16.40L10.30 4.40M15.50 13.40L5.10 7.40M15.50 7.40L5.10 13.40" fill="none" stroke="#fafafa" stroke-width="1.2"/></svg>
<div class="t" style="left:156px;top:730px;color:#1b5aac">0</div>
<div class="a" style="left:170px;top:726px;width:1px;height:20px;background:#d0d0d0"></div>
<div class="t" style="left:177px;top:730px;color:#1b5aac;letter-spacing:-0.2px">Počet záznamů</div>
<div class="a" style="left:264px;top:726px;width:1px;height:21px;background:#d0d0d0"></div>
<div class="a" style="left:878px;top:726px;width:1px;height:21px;background:#d0d0d0"></div>
<svg style="left:884px;top:729px" width="15" height="15" viewBox="0 0 15 15"><path d="M13.5 2.2V1.2H1.8L7.6 7.5L1.8 13.8H13.5V12.8" fill="none" stroke="#1b5aac" stroke-width="1.3" stroke-linejoin="round"/></svg>
<div class="a" style="left:904px;top:726px;width:1px;height:21px;background:#d0d0d0"></div>
<svg style="left:909px;top:728px" width="17" height="17" viewBox="0 0 17 17"><path d="M2.2 14.6L3 11.2L12.2 2A1.6 1.6 0 0 1 14.9 4.7L5.6 13.9Z M11 3.2L13.7 5.9" fill="none" stroke="#1b5aac" stroke-width="1.2" stroke-linejoin="round"/><path d="M8.5 15.1H16" stroke="#1b5aac" stroke-width="1.3"/></svg>
<div class="a" style="left:941px;top:34px;width:7px;height:723px;background:#00adef"></div>
<svg style="left:941px;top:380px" width="7" height="28" viewBox="0 0 7 28"><circle cx="3.6" cy="5.1" r="1.6" fill="#62c9f2"/><circle cx="3.6" cy="14.1" r="1.6" fill="#62c9f2"/><circle cx="3.6" cy="23" r="1.6" fill="#62c9f2"/></svg>
<div class="a" style="left:951px;top:34px;width:231px;height:723px;background:#0152a4"></div>
<div class="t" style="left:957px;top:45px;color:#fff;font-size:20px;line-height:22px">Upomínka SA/2014/2</div>
<svg style="left:1159px;top:47px" width="15" height="15" viewBox="0 0 15 15"><path d="M5.4 5.6H1.1V13.8H9.8V10" fill="none" stroke="#fff" stroke-width="1.4"/><path d="M5 1.5H13.9V10" fill="none" stroke="#fff" stroke-width="1.4"/><path d="M5.4 9.8L9.4 5.8" stroke="#fff" stroke-width="1.3"/><path d="M11.4 3.8L7.2 4.8L10.4 8Z" fill="#fff"/></svg>
<div class="a" style="left:954px;top:76px;width:225px;height:170px;background:#fcfcfc"></div>
<div class="a" style="left:954px;top:76px;width:225px;height:25px;background:#00adef"></div>
<div class="t" style="left:958px;top:82px;color:#fff;font-weight:bold;font-size:13px">Základní údaje</div>
<div class="a" style="left:1154px;top:78px;width:1px;height:21px;background:#0a8cc8"></div>
<svg style="left:1160px;top:85px" width="14" height="8" viewBox="0 0 14 8"><path d="M0.6 7L6.6 1.3L12.6 7" fill="none" stroke="#fff" stroke-width="1.2"/></svg>
<div class="t" style="left:961px;top:108px;color:#2449a6;letter-spacing:-0.35px">Zákazník:</div>
<div class="t" style="left:1000px;width:171.5px;text-align:right;top:108px;letter-spacing:-0.5px">AB GROUP<span style="color:#2449a6"></span></div>
<div class="a" style="left:961px;top:122px;width:211px;height:1px;background:#e2e2e2"></div>
<div class="t" style="left:961px;top:130px;color:#2449a6;letter-spacing:-0.35px">Popis:</div>
<div class="t" style="left:1000px;width:171.5px;text-align:right;top:130px;letter-spacing:-0.5px"><span style="color:#2449a6"></span></div>
<div class="a" style="left:961px;top:144px;width:211px;height:1px;background:#e2e2e2"></div>
<div class="t" style="left:961px;top:152px;color:#2449a6;letter-spacing:-0.35px">Číslo:</div>
<div class="t" style="left:1000px;width:171.5px;text-align:right;top:152px;letter-spacing:-0.5px">2<span style="color:#2449a6"></span></div>
<div class="a" style="left:961px;top:166px;width:211px;height:1px;background:#e2e2e2"></div>
<div class="t" style="left:961px;top:174px;color:#2449a6;letter-spacing:-0.35px">Částka:</div>
<div class="t" style="left:1000px;width:171.5px;text-align:right;top:174px;letter-spacing:-0.5px">368,36<span style="color:#2449a6"> EUR</span></div>
<div class="a" style="left:961px;top:188px;width:211px;height:1px;background:#e2e2e2"></div>
<div class="t" style="left:961px;top:196px;color:#2449a6;letter-spacing:-0.35px">Úroky:</div>
<div class="t" style="left:1000px;width:171.5px;text-align:right;top:196px;letter-spacing:-0.5px">43,10<span style="color:#2449a6"> EUR</span></div>
<div class="a" style="left:961px;top:210px;width:211px;height:1px;background:#e2e2e2"></div>
<svg style="position:absolute;left:1153px;top:220px" width="15" height="17" viewBox="0 0 11 13"><path d="M2.3 6V4.1a3.2 3.2 0 0 1 6.4 0V6" fill="none" stroke="#40bf78" stroke-width="1.3"/><rect x="0" y="5.6" width="11" height="7.4" fill="#40bf78"/></svg>
<div class="a" style="left:954px;top:253px;width:225px;height:76px;background:#fcfcfc"></div>
<div class="a" style="left:954px;top:253px;width:225px;height:25px;background:#00adef"></div>
<div class="t" style="left:958px;top:259px;color:#fff;font-weight:bold;font-size:13px">Ostatní údaje</div>
<div class="a" style="left:1154px;top:255px;width:1px;height:21px;background:#0a8cc8"></div>
<svg style="left:1160px;top:262px" width="14" height="8" viewBox="0 0 14 8"><path d="M0.6 7L6.6 1.3L12.6 7" fill="none" stroke="#fff" stroke-width="1.2"/></svg>
<div class="t" style="left:961px;top:285px;color:#2449a6;letter-spacing:-0.35px">Vytvořil:</div>
<div class="t" style="left:1000px;width:171.5px;text-align:right;top:285px;letter-spacing:-0.4px">K2 <span style="color:#2449a6">28.05.2014</span></div>
<div class="a" style="left:961px;top:299px;width:211px;height:1px;background:#e2e2e2"></div>
<div class="t" style="left:961px;top:307px;color:#2449a6;letter-spacing:-0.35px">Změnil:</div>
<div class="t" style="left:1000px;width:171.5px;text-align:right;top:307px;letter-spacing:-0.4px">K2 <span style="color:#2449a6">2020-07-22 11:20:09</span></div>
<div class="a" style="left:961px;top:321px;width:211px;height:1px;background:#e2e2e2"></div>
<div class="a" style="left:954px;top:678px;width:225px;height:76px;background:#fcfcfc"></div>
<div class="a" style="left:954px;top:678px;width:225px;height:25px;background:#00adef"></div>
<div class="t" style="left:958px;top:684px;color:#fff;font-weight:bold;font-size:13px">Nastavení</div>
<div class="a" style="left:1154px;top:680px;width:1px;height:21px;background:#0a8cc8"></div>
<svg style="left:1160px;top:687px" width="14" height="8" viewBox="0 0 14 8"><path d="M0.6 7L6.6 1.3L12.6 7" fill="none" stroke="#fff" stroke-width="1.2"/></svg>
<div class="t" style="left:968px;top:710px;color:#2449a6">Období</div>
<div class="a" style="left:961px;top:724px;width:211px;height:23px;background:#fdfde6;border:1px solid #00adef"></div>
<div class="t" style="left:964px;top:730px;letter-spacing:0.3px">2020</div>
<svg style="left:1154px;top:730px" width="13" height="11" viewBox="0 0 13 11"><rect x="1" y="1" width="2.8" height="2.8" fill="#1b5aac"/><rect x="5.1" y="1" width="2.8" height="2.8" fill="#1b5aac"/><rect x="9.2" y="1" width="2.8" height="2.8" fill="#1b5aac"/><path d="M1.2 5.6L6.5 9.8L11.8 5.6" fill="none" stroke="#1b5aac" stroke-width="1.2"/></svg>
</body></html>
